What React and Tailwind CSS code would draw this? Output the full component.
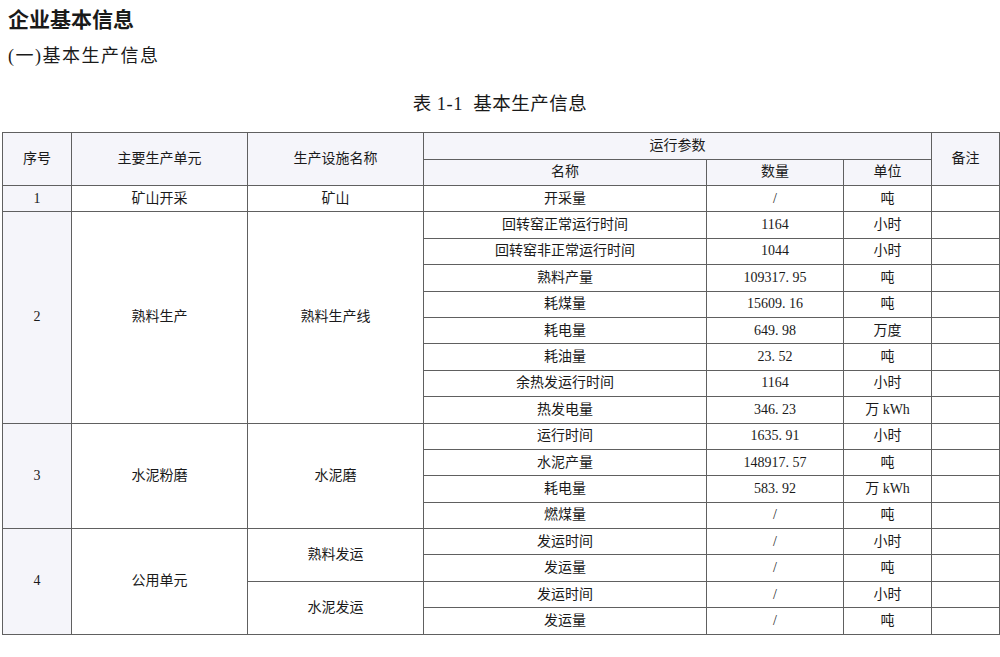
import React from "react";

const FONT = { fontFamily: '"Liberation Serif", "Noto Sans CJK SC", serif' };

// rows of 运行参数: [名称, 数量, 单位]
const groups = [
  {
    no: "1",
    unit: "矿山开采",
    facilities: [{ name: "矿山", params: [["开采量", "/", "吨"]] }],
  },
  {
    no: "2",
    unit: "熟料生产",
    facilities: [
      {
        name: "熟料生产线",
        params: [
          ["回转窑正常运行时间", "1164", "小时"],
          ["回转窑非正常运行时间", "1044", "小时"],
          ["熟料产量", "109317. 95", "吨"],
          ["耗煤量", "15609. 16", "吨"],
          ["耗电量", "649. 98", "万度"],
          ["耗油量", "23. 52", "吨"],
          ["余热发运行时间", "1164", "小时"],
          ["热发电量", "346. 23", "万 kWh"],
        ],
      },
    ],
  },
  {
    no: "3",
    unit: "水泥粉磨",
    facilities: [
      {
        name: "水泥磨",
        params: [
          ["运行时间", "1635. 91", "小时"],
          ["水泥产量", "148917. 57", "吨"],
          ["耗电量", "583. 92", "万 kWh"],
          ["燃煤量", "/", "吨"],
        ],
      },
    ],
  },
  {
    no: "4",
    unit: "公用单元",
    facilities: [
      {
        name: "熟料发运",
        params: [
          ["发运时间", "/", "小时"],
          ["发运量", "/", "吨"],
        ],
      },
      {
        name: "水泥发运",
        params: [
          ["发运时间", "/", "小时"],
          ["发运量", "/", "吨"],
        ],
      },
    ],
  },
];

const cell = "border border-[#606060] text-center align-middle p-0";

function Body() {
  const rows = [];
  groups.forEach((g) => {
    const total = g.facilities.reduce((n, f) => n + f.params.length, 0);
    g.facilities.forEach((f, fi) => {
      f.params.forEach((p, pi) => {
        const first = fi === 0 && pi === 0;
        rows.push(
          <tr key={`${g.no}-${fi}-${pi}`} className="h-[26.4px]">
            {first && (
              <td rowSpan={total} className={`${cell} bg-[#f5f5fa]`}>
                {g.no}
              </td>
            )}
            {first && (
              <td rowSpan={total} className={cell}>
                {g.unit}
              </td>
            )}
            {pi === 0 && (
              <td rowSpan={f.params.length} className={cell}>
                {f.name}
              </td>
            )}
            <td className={cell}>{p[0]}</td>
            <td className={cell}>{p[1]}</td>
            <td className={cell}>{p[2]}</td>
            <td className={cell}></td>
          </tr>
        );
      });
    });
  });
  return <tbody>{rows}</tbody>;
}

export default function App() {
  return (
    <div className="w-[1000px] h-[657px] bg-white text-[#1a1a1a] overflow-hidden" style={FONT}>
      <h1
        className="mt-[3px] ml-[8px] text-[21px] leading-[30px] font-bold"
        style={{ fontFamily: '"Noto Sans CJK SC", sans-serif' }}
      >
        企业基本信息
      </h1>
      <p className="mt-[9px] ml-[8px] text-[18px] leading-[28px] tracking-[1.5px]">(一)基本生产信息</p>
      <p className="mt-[21px] text-center text-[18.5px] leading-[26px] tracking-[0.5px]">表 1-1&nbsp; 基本生产信息</p>

      <table className="mt-[15px] ml-[2px] w-[997px] table-fixed border-collapse text-[14px] leading-none">
        <colgroup>
          <col className="w-[69px]" />
          <col className="w-[176px]" />
          <col className="w-[176px]" />
          <col className="w-[283px]" />
          <col className="w-[137px]" />
          <col className="w-[88px]" />
          <col className="w-[68px]" />
        </colgroup>
        <thead className="bg-[#f5f5fa]">
          <tr className="h-[26.5px]">
            <th rowSpan={2} className={`${cell} font-normal`}>序号</th>
            <th rowSpan={2} className={`${cell} font-normal`}>主要生产单元</th>
            <th rowSpan={2} className={`${cell} font-normal`}>生产设施名称</th>
            <th colSpan={3} className={`${cell} font-normal`}>运行参数</th>
            <th rowSpan={2} className={`${cell} font-normal`}>备注</th>
          </tr>
          <tr className="h-[26.5px]">
            <th className={`${cell} font-normal`}>名称</th>
            <th className={`${cell} font-normal`}>数量</th>
            <th className={`${cell} font-normal`}>单位</th>
          </tr>
        </thead>
        <Body />
      </table>
    </div>
  );
}
